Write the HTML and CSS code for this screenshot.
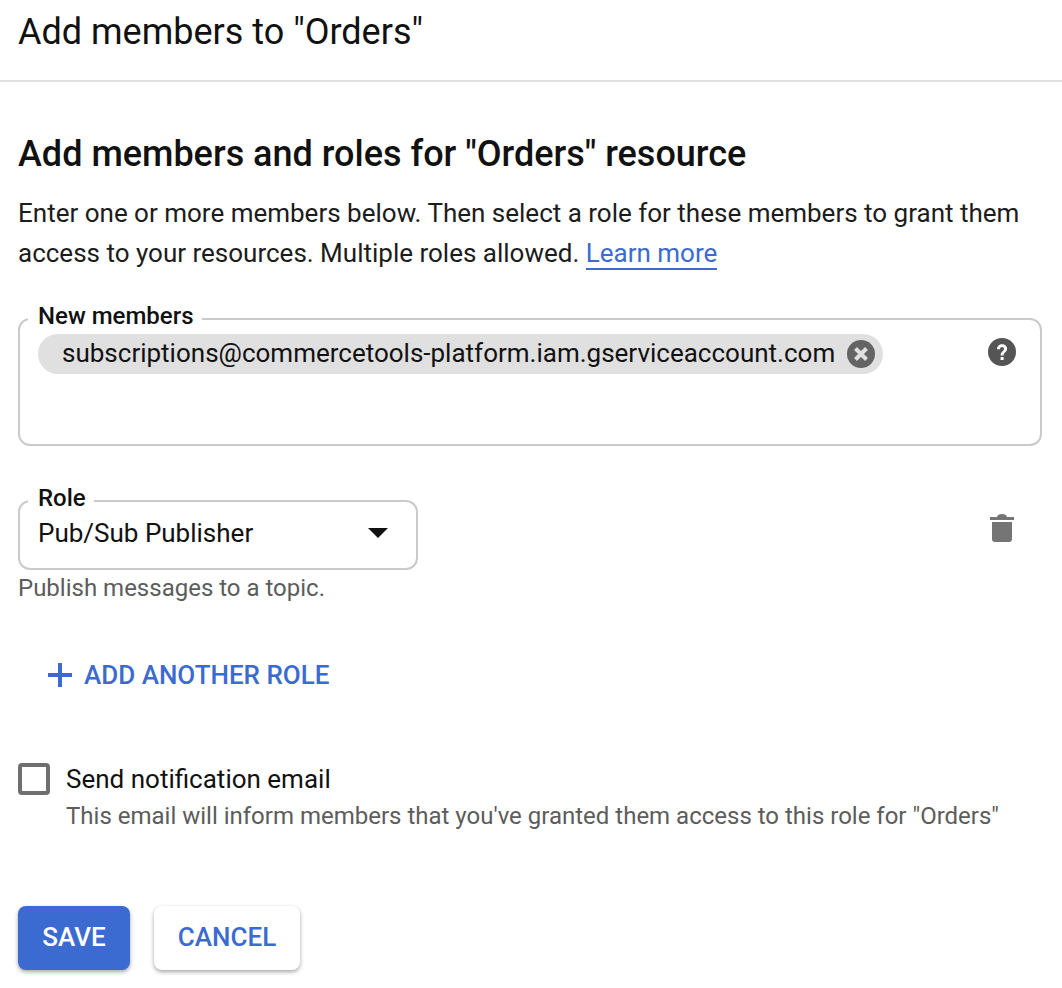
FILE: index.html
```html
<!DOCTYPE html>
<html lang="en">
<head>
    <meta charset="UTF-8">
    <title>Add members</title>
    <link rel="stylesheet" href="styles.css">
</head>
<body>
    <header class="page-header">
        <h1>Add members to "Orders"</h1>
    </header>
    <main class="content">
        <h2>Add members and roles for "Orders" resource</h2>
        <p class="intro">Enter one or more members below. Then select a role for these members to grant them access to your resources. Multiple roles allowed. <a href="#">Learn more</a></p>

        <fieldset class="field members-field">
            <legend>New members</legend>
            <div class="members-row">
                <span class="chip">
                    subscriptions@commercetools-platform.iam.gserviceaccount.com
                    <svg class="chip-close" viewBox="0 0 28 28"><circle cx="14" cy="14" r="14" fill="#646464"/><path d="M8.500 8.500l11 11M19.500 8.500l-11 11" stroke="#e0e0e0" stroke-width="4" fill="none"/></svg>
                </span>
                <svg class="help-icon" viewBox="0 0 28 28"><circle cx="14" cy="14" r="14" fill="#555"/><path d="M9 11.200c0-3 2.200-5 5.100-5s5 1.900 5 4.500c0 3.300-3.500 3.500-3.500 6.900h-3c0-4.300 3.500-4.400 3.500-6.800 0-1.100-.9-1.900-2-1.900s-2.100.9-2.100 2.300z" fill="#fff"/><rect x="12.600" y="19" width="3" height="3" fill="#fff"/></svg>
            </div>
        </fieldset>

        <div class="role-row">
            <div class="role-col">
                <fieldset class="field role-field">
                    <legend>Role</legend>
                    <div class="select">
                        <span>Pub/Sub Publisher</span>
                        <span class="caret"></span>
                    </div>
                </fieldset>
                <p class="hint">Publish messages to a topic.</p>
            </div>
            <svg class="trash-icon" viewBox="0 0 24 28"><path d="M0 3h7c.5-2 2-3 5-3s4.500 1 5 3h7v3H0z" fill="#757575"/><path d="M2 8h20v17c0 1.700-1 3-2.800 3H4.800C3 28 2 26.700 2 25z" fill="#757575"/></svg>
        </div>

        <button class="add-role" type="button">
            <svg class="plus-icon" viewBox="0 0 24 24"><path d="M10 0h4v10h10v4H14v10h-4V14H0v-4h10z" fill="#3b6bd0"/></svg>
            ADD ANOTHER ROLE
        </button>

        <div class="notify">
            <span class="checkbox"></span>
            <div>
                <div class="notify-title">Send notification email</div>
                <div class="notify-text">This email will inform members that you've granted them access to this role for "Orders"</div>
            </div>
        </div>

        <div class="actions">
            <button class="btn btn-primary" type="button">SAVE</button>
            <button class="btn btn-secondary" type="button">CANCEL</button>
        </div>
    </main>
</body>
</html>
```

FILE: styles.css
```css
html, body {
    margin: 0;
    height: 988px;
    overflow: hidden;
}
body {
    background-color: #fff;
    font-family: Roboto, "Liberation Sans", sans-serif;
    color: #111;
}
.page-header {
    height: 82px;
    box-sizing: border-box;
    border-bottom: 2px solid #e0e0e0;
    padding: 9px 18px 0;
}
h1 {
    margin: 0;
    font-size: 36px;
    line-height: 46px;
    font-weight: 400;
}
.content {
    padding: 0 20px 0 18px;
}
h2 {
    margin: 49px 0 0;
    font-size: 36px;
    line-height: 46px;
    font-weight: 500;
}
.intro {
    margin: 16px 0 0;
    font-size: 26px;
    line-height: 40px;
    color: #1c1c1c;
}
.intro a {
    color: #3b6bd0;
    text-decoration: none;
    border-bottom: 2px solid #3b6bd0;
}
.field {
    margin: 0;
    padding: 0 18px;
    border: 2px solid #cacaca;
    border-radius: 12px;
    box-sizing: border-box;
}
.field legend {
    margin-left: -10px;
    padding: 0 8px 6px 10px;
    font-size: 24px;
    line-height: 26px;
    font-weight: 500;
}
.members-field {
    margin-top: 30px;
    height: 143px;
}
.members-row {
    display: flex;
    justify-content: space-between;
    align-items: flex-start;
    margin-top: -1px;
}
.chip {
    display: flex;
    align-items: center;
    gap: 12px;
    height: 40px;
    box-sizing: border-box;
    padding: 0 8px 2px 24px;
    border-radius: 20px;
    background-color: #e0e0e0;
    font-size: 26px;
}
.chip-close {
    width: 28px;
    height: 28px;
    margin-top: 2px;
}
.help-icon {
    width: 28px;
    height: 28px;
    margin: 4px 6px 0 0;
}
.role-row {
    display: flex;
    justify-content: space-between;
    align-items: flex-start;
    margin-top: 39px;
}
.role-col {
    width: 400px;
}
.role-field {
    height: 85px;
}
.select {
    display: flex;
    justify-content: space-between;
    align-items: center;
    margin-top: -4px;
    padding: 0 10px 0 0;
    font-size: 26px;
    line-height: 40px;
}
.caret {
    width: 0;
    height: 0;
    border-left: 10px solid transparent;
    border-right: 10px solid transparent;
    border-top: 10px solid #111;
}
.hint {
    margin: 1px 0 0;
    font-size: 24px;
    line-height: 34px;
    color: #5c5c5c;
}
.trash-icon {
    width: 24px;
    height: 28px;
    margin: 29px 28px 0 0;
}
.add-role {
    display: flex;
    align-items: center;
    gap: 12px;
    margin: 53px 0 0 30px;
    padding: 0;
    border: none;
    background: none;
    font-family: inherit;
    font-size: 26px;
    line-height: 34px;
    font-weight: 500;
    color: #3b6bd0;
}
.plus-icon {
    width: 24px;
    height: 24px;
}
.notify {
    display: flex;
    gap: 16px;
    margin-top: 68px;
}
.checkbox {
    width: 32px;
    height: 32px;
    margin-top: 3px;
    box-sizing: border-box;
    border: 4px solid #6f6f6f;
    border-radius: 4px;
}
.notify-title {
    font-size: 26px;
    line-height: 38px;
}
.notify-text {
    font-size: 24px;
    line-height: 36px;
    color: #5c5c5c;
}
.actions {
    display: flex;
    gap: 24px;
    margin-top: 72px;
}
.btn {
    height: 64px;
    padding: 0 0 3px;
    border: none;
    border-radius: 8px;
    font-family: inherit;
    font-size: 26px;
    font-weight: 500;
    box-shadow: 0 2px 4px rgba(0,0,0,0.35);
}
.btn-primary {
    width: 112px;
    background-color: #3b6bd0;
    color: #fff;
}
.btn-secondary {
    width: 146px;
    background-color: #fff;
    color: #3b6bd0;
}
```
